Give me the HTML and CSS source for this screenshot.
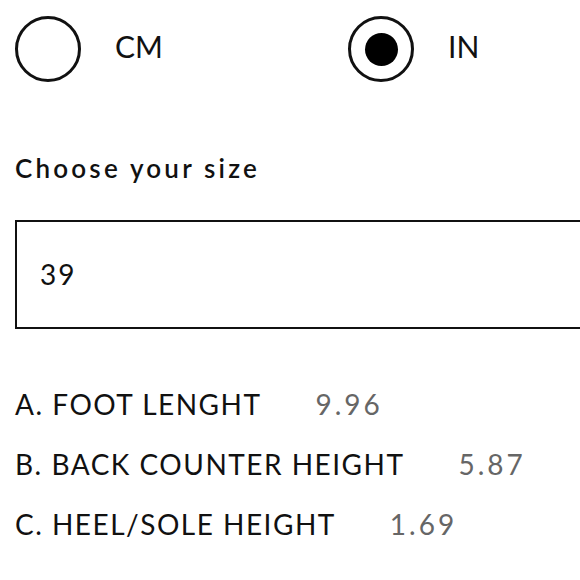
FILE: index.html
```html
<!DOCTYPE html>
<html lang="en">
<head>
<meta charset="utf-8">
<title>Size</title>
<link rel="stylesheet" href="styles.css">
</head>
<body>
<div class="page">
  <div class="units">
    <label class="unit unit-cm">
      <span class="radio"></span>
      <span class="unit-label">CM</span>
    </label>
    <label class="unit">
      <span class="radio radio-on"><span class="dot"></span></span>
      <span class="unit-label">IN</span>
    </label>
  </div>
  <h2 class="heading">Choose your size</h2>
  <div class="select"><span class="select-value">39</span></div>
  <ul class="measures">
    <li class="measure"><span class="m-label">A. FOOT LENGHT</span><span class="m-value">9.96</span></li>
    <li class="measure"><span class="m-label">B. BACK COUNTER HEIGHT</span><span class="m-value">5.87</span></li>
    <li class="measure"><span class="m-label">C. HEEL/SOLE HEIGHT</span><span class="m-value">1.69</span></li>
  </ul>
</div>
</body>
</html>
```
FILE: styles.css
```css
html, body {
  margin: 0;
  padding: 0;
  background: #fff;
}
body {
  font-family: Lato, "Liberation Sans", sans-serif;
  color: #111;
  overflow: hidden;
}
.page {
  padding: 16px 0 0 15px;
}
.units {
  display: flex;
  align-items: flex-start;
  height: 66px;
}
.unit {
  display: flex;
  align-items: flex-start;
  gap: 34px;
}
.unit-cm {
  width: 333px;
}
.radio {
  box-sizing: border-box;
  width: 66px;
  height: 66px;
  border: 3px solid #111;
  border-radius: 50%;
  display: flex;
  align-items: center;
  justify-content: center;
  flex: none;
}
.dot {
  width: 33px;
  height: 33px;
  border-radius: 50%;
  background: #000;
}
.unit-label {
  font-size: 30px;
  line-height: 60px;
  font-weight: 400;
}
.heading {
  margin: 70px 0 0 0;
  font-size: 26px;
  line-height: 32px;
  font-weight: 600;
  letter-spacing: 3.2px;
}
.select {
  margin-top: 36px;
  box-sizing: border-box;
  height: 109px;
  border: 2px solid #111;
  border-right: 0;
  padding-left: 23px;
}
.select-value {
  font-size: 28px;
  line-height: 105px;
  letter-spacing: 2px;
}
.measures {
  list-style: none;
  margin: 45px 0 0 0;
  padding: 0;
}
.measure {
  display: flex;
  font-size: 28px;
  line-height: 60px;
  white-space: nowrap;
  letter-spacing: 1.5px;
}
.m-value {
  margin-left: 54px;
  color: #666;
  letter-spacing: 3px;
}
```
